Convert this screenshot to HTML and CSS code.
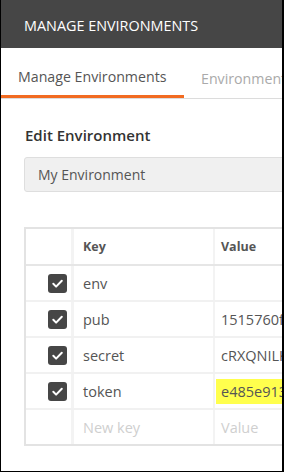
FILE: index.html
```html
<!DOCTYPE html>
<html>
<head>
<meta charset="utf-8">
<link rel="stylesheet" href="styles.css">
</head>
<body>
<div class="frame">
  <div class="header">MANAGE ENVIRONMENTS</div>
  <div class="tabs">
    <div class="tab active">Manage Environments</div>
    <div class="tab">Environment templates</div>
  </div>
  <div class="content">
    <h2 class="title">Edit Environment</h2>
    <div class="input">My Environment</div>
    <div class="table">
      <div class="row head">
        <div class="cell check"></div>
        <div class="cell key">Key</div>
        <div class="cell value">Value</div>
      </div>
      <div class="row">
        <div class="cell check"><span class="box"><svg width="19" height="19" viewBox="0 0 19 19"><path d="M5.3 9.8l2.8 2.8L13.8 6.7" fill="none" stroke="#fff" stroke-width="2" stroke-linecap="round" stroke-linejoin="round"/></svg></span></div>
        <div class="cell key">env</div>
        <div class="cell value"></div>
      </div>
      <div class="row">
        <div class="cell check"><span class="box"><svg width="19" height="19" viewBox="0 0 19 19"><path d="M5.3 9.8l2.8 2.8L13.8 6.7" fill="none" stroke="#fff" stroke-width="2" stroke-linecap="round" stroke-linejoin="round"/></svg></span></div>
        <div class="cell key">pub</div>
        <div class="cell value">1515760f8a21c9</div>
      </div>
      <div class="row">
        <div class="cell check"><span class="box"><svg width="19" height="19" viewBox="0 0 19 19"><path d="M5.3 9.8l2.8 2.8L13.8 6.7" fill="none" stroke="#fff" stroke-width="2" stroke-linecap="round" stroke-linejoin="round"/></svg></span></div>
        <div class="cell key">secret</div>
        <div class="cell value">cRXQNILK7a</div>
      </div>
      <div class="row">
        <div class="cell check"><span class="box"><svg width="19" height="19" viewBox="0 0 19 19"><path d="M5.3 9.8l2.8 2.8L13.8 6.7" fill="none" stroke="#fff" stroke-width="2" stroke-linecap="round" stroke-linejoin="round"/></svg></span></div>
        <div class="cell key">token</div>
        <div class="cell value"><span class="hl">e485e913a7c2d</span></div>
      </div>
      <div class="row last">
        <div class="cell check"></div>
        <div class="cell key placeholder">New key</div>
        <div class="cell value placeholder">Value</div>
      </div>
    </div>
  </div>
</div>
</body>
</html>
```
FILE: styles.css
```css
* { box-sizing: border-box; }
html, body { margin: 0; padding: 0; background: #fff; }
body { font-family: "Open Sans", "Noto Sans", sans-serif; }
.frame {
  width: 284px;
  height: 472px;
  overflow: hidden;
  border-left: 1px solid #000;
  border-right: 2px solid #000;
  border-bottom: 1px solid #000;
  background: #fff;
}
.header {
  height: 48px;
  background: #464646;
  color: #fff;
  font-size: 14.4px;
  display: flex;
  align-items: center;
  padding: 3px 0 0 23px;
  white-space: nowrap;
}
.tabs {
  display: flex;
  height: 51px;
  border-bottom: 1px solid #dcdcdc;
  white-space: nowrap;
}
.tab {
  font-size: 14.2px;
  color: #aaa;
  display: flex;
  align-items: center;
  padding: 10px 17px 0 17px;
  flex-shrink: 0;
}
.tab.active {
  width: 184px;
  margin-left: -1px;
  padding-left: 18px;
  color: #555;
  border-bottom: 3px solid #f26b21;
}
.content {
  padding-left: 23px;
  width: 500px;
}
.title {
  margin: 25px 0 0 1px;
  font-size: 15px;
  font-weight: 600;
  color: #333;
  line-height: 22px;
}
.input {
  margin-top: 11px;
  height: 35px;
  background: #f0f0f0;
  border: 1px solid #dedede;
  border-radius: 3px;
  font-size: 14px;
  color: #555;
  padding-left: 13px;
  display: flex;
  align-items: center;
}
.table {
  margin-top: 35px;
  border: 2px solid #e3e3e3;
  border-right: none;
}
.row {
  display: grid;
  grid-template-columns: 48px 141px 1fr;
  height: 36px;
  border-bottom: 2px solid #f1f1f1;
}
.row.head { height: 37px; border-bottom: 2px solid #e6e6e6; }
.row.last { border-bottom: none; height: 34px; }
.cell {
  display: flex;
  align-items: center;
  font-size: 14.5px;
  color: #555;
  white-space: nowrap;
  overflow: hidden;
}
.cell.check {
  justify-content: flex-end;
  padding-right: 4px;
  border-right: 3px solid #f3f3f3;
}
.cell.key {
  padding-left: 9px;
  border-right: 2px solid #f3f3f3;
}
.cell.value { padding-left: 6px; }
.head .cell { font-size: 12.5px; font-weight: 700; color: #555; }
.box {
  width: 19px;
  height: 19px;
  background: #464646;
  border-radius: 3px;
  display: block;
}
.box svg { display: block; }
.hl {
  background: #ffff4d;
  display: block;
  height: 25px;
  line-height: 25px;
  margin-left: -5px;
  padding-left: 5px;
  width: 200px;
}
.placeholder { color: #cfcfcf; }
```
